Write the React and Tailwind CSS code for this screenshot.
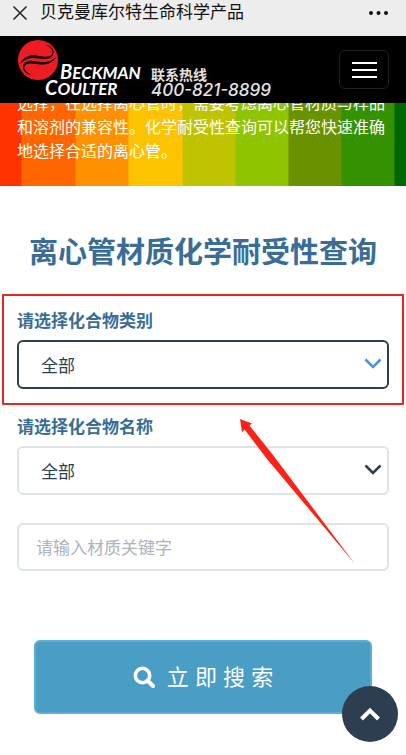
/**
 * Compatibility lookup page - mobile layout
 *
 * - In-app browser bar and black brand header
 * - Colour striped intro banner
 * - Search form for centrifuge tube materials
 */

import { useState } from "react";

const Logo = () => (
  <svg viewBox="0 0 130 64" className="w-[130px] h-16 shrink-0" role="img" aria-label="Beckman Coulter">
    <circle cx="21" cy="22" r="20" fill="#ed1c24" />
    {/* Two opposed waves inside the disc */}
    <path
      d="M3 26 C7 18 14 16 22 18 C29 19.500 35 19 35.500 14.500 C35.500 11 32.500 8 28 6.500 C33 7.500 37 10.500 36.500 15 C35.500 21 29 21.500 22 20.500 C14 19 8 20.500 3 26 Z"
      fill="#000"
    />
    <path
      d="M39 19 C35 26 28 27.500 20 26 C13 24.800 8 25.500 7.300 29 C7 32 10 35 14.500 36.800 C9.500 36.200 5.500 33 6 28.500 C7 22.500 13 22 20 23.500 C28 25 34 24 39 19 Z"
      fill="#000"
    />
    <g fill="#fff" fontFamily="Lato, sans-serif" fontStyle="italic" fontWeight="700">
      <text x="43" y="41" fontSize="20">
        B<tspan fontSize="17">ECKMAN</tspan>
      </text>
      <text x="28" y="57" fontSize="20">
        C<tspan fontSize="17">OULTER</tspan>
      </text>
    </g>
  </svg>
);

const BrowserBar = () => (
  <div className="flex items-center bg-[#ededed] px-3 pb-[10px] text-[17px] leading-[26px] text-[#111]">
    <button type="button" aria-label="关闭" className="mr-3">
      <svg viewBox="0 0 16 16" className="size-4" stroke="#222" strokeWidth="1.500">
        <path d="M1.500 1.500L14.500 14.500M14.500 1.500L1.500 14.500" />
      </svg>
    </button>
    <span className="flex-1">贝克曼库尔特生命科学产品</span>
    <button type="button" aria-label="更多" className="mr-1">
      <svg viewBox="0 0 22 6" className="h-[6px] w-[22px]" fill="#111">
        <circle cx="3" cy="3" r="2" />
        <circle cx="10.500" cy="3" r="2" />
        <circle cx="18" cy="3" r="2" />
      </svg>
    </button>
  </div>
);

const Header = () => (
  <header className="flex h-[67px] items-center bg-black px-[17px] text-white">
    <Logo />
    <div className="ml-1 flex-1 pt-6 whitespace-nowrap text-[#e4e4e4]">
      <p className="text-[14px] leading-4 font-bold">联系热线</p>
      <p className="font-[Inter] text-[17px] leading-[14px] font-medium italic">400-821-8899</p>
    </div>
    <button
      type="button"
      aria-label="菜单"
      className="flex h-[39px] w-[50px] shrink-0 flex-col items-center justify-center gap-[5px] rounded-md border border-[#1d2024]"
    >
      <span className="h-[2px] w-[25px] bg-white" />
      <span className="h-[2px] w-[25px] bg-white" />
      <span className="h-[2px] w-[25px] bg-white" />
    </button>
  </header>
);

const SelectField = ({ id, label, active, options }) => {
  const [value, setValue] = useState(options[0]);

  return (
    <div className="relative">
      <label htmlFor={id} className="mb-[5px] block leading-[26px] font-bold text-[#3a6d96]">
        {label}
      </label>
      <div className="relative">
        <select
          id={id}
          value={value}
          onChange={(e) => setValue(e.target.value)}
          className={`block h-[49px] w-full appearance-none rounded-md border-2 bg-white px-[22px] pt-1 text-[#2c3e50] outline-none ${
            active ? "border-[#2c3e50]" : "border-[#dce4e8]"
          }`}
        >
          {options.map((option) => (
            <option key={option}>{option}</option>
          ))}
        </select>
        <svg
          viewBox="0 0 18 12"
          className={`pointer-events-none absolute top-[18px] right-[7px] h-3 w-[18px] ${
            active ? "text-[#4a90e2]" : "text-[#2c3e50]"
          }`}
          fill="none"
          stroke="currentColor"
          strokeWidth="2.500"
        >
          <path d="M1.500 1.500L9 9L16.500 1.500" />
        </svg>
      </div>
      {/* Highlight frame around the field in focus */}
      {active && (
        <div className="pointer-events-none absolute -inset-x-[15px] -top-[15px] -bottom-4 rounded-[1px] border-2 border-[#e8281f]" />
      )}
    </div>
  );
};

const App = () => {
  const [keyword, setKeyword] = useState("");

  return (
    <div className="min-h-screen bg-white font-['Liberation_Sans','Noto_Sans_CJK_SC',sans-serif]">
      <BrowserBar />
      <Header />

      {/* Banner text is scrolled partly under the header */}
      <section className="overflow-hidden bg-[linear-gradient(90deg,#ff3300_21px,#ff6600_22px_75px,#ff9100_76px_128px,#fcc400_129px_182px,#c0c400_183px_235px,#8fc400_236px_288px,#6a9200_289px_341px,#349200_342px_394px,#006600_395px)] px-[17px] pb-[22px]">
        <p className="-mt-[11px] text-base leading-6 text-white">
          选择，在选择离心管时，需要考虑离心管材质与样品和溶剂的兼容性。化学耐受性查询可以帮您快速准确地选择合适的离心管。
        </p>
      </section>

      <main className="relative px-[17px] pt-[49px] pb-10">
        <h1 className="text-center text-[29px] leading-9 font-bold whitespace-nowrap text-[#3a6d96]">
          离心管材质化学耐受性查询
        </h1>

        <form className="mt-[38px] text-[17px]" onSubmit={(e) => e.preventDefault()}>
          <div className="flex flex-col gap-[26px]">
            <SelectField id="category" label="请选择化合物类别" options={["全部"]} active />
            <SelectField id="compound" label="请选择化合物名称" options={["全部"]} />
          </div>
          <input
            type="text"
            aria-label="材质关键字"
            placeholder="请输入材质关键字"
            value={keyword}
            onChange={(e) => setKeyword(e.target.value)}
            className="mt-7 block h-12 w-full rounded-md border-2 border-[#dce4e8] px-[17px] pt-[3px] text-[#2c3e50] outline-none placeholder:text-[#acb3bd]"
          />
          <div className="mt-[69px] px-[17px]">
            <button
              type="submit"
              className="flex h-[74px] w-full items-center justify-center gap-3 rounded-md border-2 border-[#5aafd3] bg-[#4a9dc4] text-[22px] text-white"
            >
              <svg viewBox="0 0 22 22" className="size-[22px]" fill="none" stroke="currentColor">
                <circle cx="9.500" cy="9.500" r="7.200" strokeWidth="3.600" />
                <path d="M14.500 14.500L20 20" strokeWidth="4" strokeLinecap="round" />
              </svg>
              立 即 搜 索
            </button>
          </div>
        </form>

        {/* Pointer arrow towards the highlighted field */}
        <svg
          viewBox="0 0 116 146"
          className="pointer-events-none absolute top-[233px] right-[50px] h-[146px] w-[116px]"
          fill="#fb2318"
        >
          <path d="M0 0L12 4.500L9.500 6.500L33 36L115 145L27 40L4.500 10.500L2 13Z" />
        </svg>
      </main>

      <button
        type="button"
        aria-label="返回顶部"
        className="fixed right-2 bottom-[13px] z-20 flex size-14 items-center justify-center rounded-full bg-[#2c3e50]"
      >
        <svg viewBox="0 0 20 14" className="h-[14px] w-5" fill="none" stroke="#fff" strokeWidth="4">
          <path d="M1.500 12L10 3.500L18.500 12" />
        </svg>
      </button>
    </div>
  );
};

export default App;
